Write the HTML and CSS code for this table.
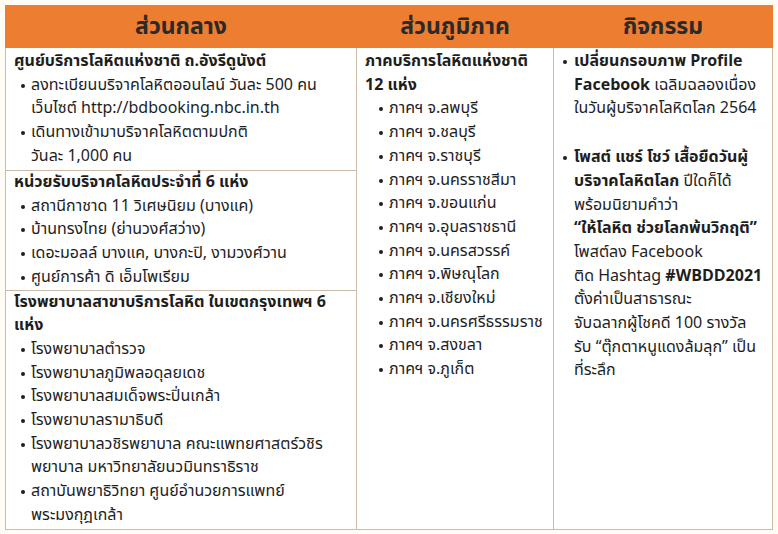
FILE: index.html
```html
<!DOCTYPE html>
<html lang="th">
<head>
<meta charset="utf-8">
<link rel="stylesheet" href="styles.css">
</head>
<body>
<table class="tbl">
  <colgroup>
    <col class="c1"><col class="c2"><col class="c3">
  </colgroup>
  <thead>
    <tr>
      <th>ส่วนกลาง</th>
      <th>ส่วนภูมิภาค</th>
      <th>กิจกรรม</th>
    </tr>
  </thead>
  <tbody>
    <tr class="row1">
      <td class="cell r1">
        <div class="head">ศูนย์บริการโลหิตแห่งชาติ ถ.อังรีดูนังต์</div>
        <ul class="list">
          <li>ลงทะเบียนบริจาคโลหิตออนไลน์ วันละ 500 คน<br>เว็บไซต์ http://bdbooking.nbc.in.th</li>
          <li>เดินทางเข้ามาบริจาคโลหิตตามปกติ<br>วันละ 1,000 คน</li>
        </ul>
      </td>
      <td class="cell top" rowspan="3">
        <div class="head">ภาคบริการโลหิตแห่งชาติ<br>12 แห่ง</div>
        <ul class="list deep">
          <li>ภาคฯ จ.ลพบุรี</li>
          <li>ภาคฯ จ.ชลบุรี</li>
          <li>ภาคฯ จ.ราชบุรี</li>
          <li>ภาคฯ จ.นครราชสีมา</li>
          <li>ภาคฯ จ.ขอนแก่น</li>
          <li>ภาคฯ จ.อุบลราชธานี</li>
          <li>ภาคฯ จ.นครสวรรค์</li>
          <li>ภาคฯ จ.พิษณุโลก</li>
          <li>ภาคฯ จ.เชียงใหม่</li>
          <li>ภาคฯ จ.นครศรีธรรมราช</li>
          <li>ภาคฯ จ.สงขลา</li>
          <li>ภาคฯ จ.ภูเก็ต</li>
        </ul>
      </td>
      <td class="cell top" rowspan="3">
        <ul class="list act">
          <li><b>เปลี่ยนกรอบภาพ Profile<br>Facebook</b> เฉลิมฉลองเนื่อง<br>ในวันผู้บริจาคโลหิตโลก 2564</li>
          <li class="gap"><b>โพสต์ แชร์ โชว์ เสื้อยืดวันผู้<br>บริจาคโลหิตโลก</b> ปีใดก็ได้<br>พร้อมนิยามคำว่า<br><b>“ให้โลหิต ช่วยโลกพ้นวิกฤติ”</b><br>โพสต์ลง Facebook<br>ติด Hashtag <b>#WBDD2021</b><br>ตั้งค่าเป็นสาธารณะ<br>จับฉลากผู้โชคดี 100 รางวัล<br>รับ “ตุ๊กตาหนูแดงล้มลุก” เป็น<br>ที่ระลึก</li>
        </ul>
      </td>
    </tr>
    <tr class="row2">
      <td class="cell r2">
        <div class="head">หน่วยรับบริจาคโลหิตประจำที่ 6 แห่ง</div>
        <ul class="list">
          <li>สถานีกาชาด 11 วิเศษนิยม (บางแค)</li>
          <li>บ้านทรงไทย (ย่านวงศ์สว่าง)</li>
          <li>เดอะมอลล์ บางแค, บางกะปิ, งามวงศ์วาน</li>
          <li>ศูนย์การค้า ดิ เอ็มโพเรียม</li>
        </ul>
      </td>
    </tr>
    <tr class="row3">
      <td class="cell r3">
        <div class="head">โรงพยาบาลสาขาบริการโลหิต ในเขตกรุงเทพฯ 6<br>แห่ง</div>
        <ul class="list">
          <li>โรงพยาบาลตำรวจ</li>
          <li>โรงพยาบาลภูมิพลอดุลยเดช</li>
          <li>โรงพยาบาลสมเด็จพระปิ่นเกล้า</li>
          <li>โรงพยาบาลรามาธิบดี</li>
          <li>โรงพยาบาลวชิรพยาบาล คณะแพทยศาสตร์วชิร<br>พยาบาล มหาวิทยาลัยนวมินทราธิราช</li>
          <li>สถาบันพยาธิวิทยา ศูนย์อำนวยการแพทย์<br>พระมงกุฎเกล้า</li>
        </ul>
      </td>
    </tr>
  </tbody>
</table>
</body>
</html>
```
FILE: styles.css
```css
html, body {
  margin: 0;
  padding: 0;
  background: #fffbf5;
}
body {
  padding: 5px 0 0 5px;
  font-family: "Noto Sans Thai", "Noto Sans", "Liberation Sans", sans-serif;
  color: #1e1e1e;
}
.tbl {
  border-collapse: collapse;
  table-layout: fixed;
  width: 767px;
  background: #ffffff;
}
.c1 { width: 351px; }
.c2 { width: 197px; }
.c3 { width: 219px; }
th {
  background: #ed7d31;
  color: #2a2a2a;
  font-size: 23px;
  font-weight: 700;
  height: 41px;
  padding: 0;
  border: 1px solid #ed7d31;
  text-align: center;
  vertical-align: middle;
  line-height: 26px;
}
.row1 { height: 123px; }
.row3 { height: 239px; }
.cell {
  border: 1px solid #cbbba8;
  padding: 0 8px;
  font-size: 16px;
  line-height: 23.7px;
  vertical-align: top;
  white-space: nowrap;
}
.r1 { padding-top: 2px; padding-bottom: 0; }
.r2 { padding-top: 0; padding-bottom: 0; }
.r3 { padding-top: 0; padding-bottom: 0; }
.top { padding-top: 2px; }
.head {
  font-weight: 700;
}
.list {
  list-style: none;
  margin: 0;
  padding: 0 0 0 6px;
}
.list li {
  position: relative;
  padding-left: 11px;
}
.list li::before {
  content: "";
  position: absolute;
  left: 1px;
  top: 10px;
  width: 4px;
  height: 4px;
  border-radius: 50%;
  background: #1e1e1e;
}
.deep {
  padding-left: 13px;
}
.act {
  padding-left: 0;
}
.act li {
  padding-left: 12px;
}
.act li.gap {
  margin-top: 25px;
}
```
